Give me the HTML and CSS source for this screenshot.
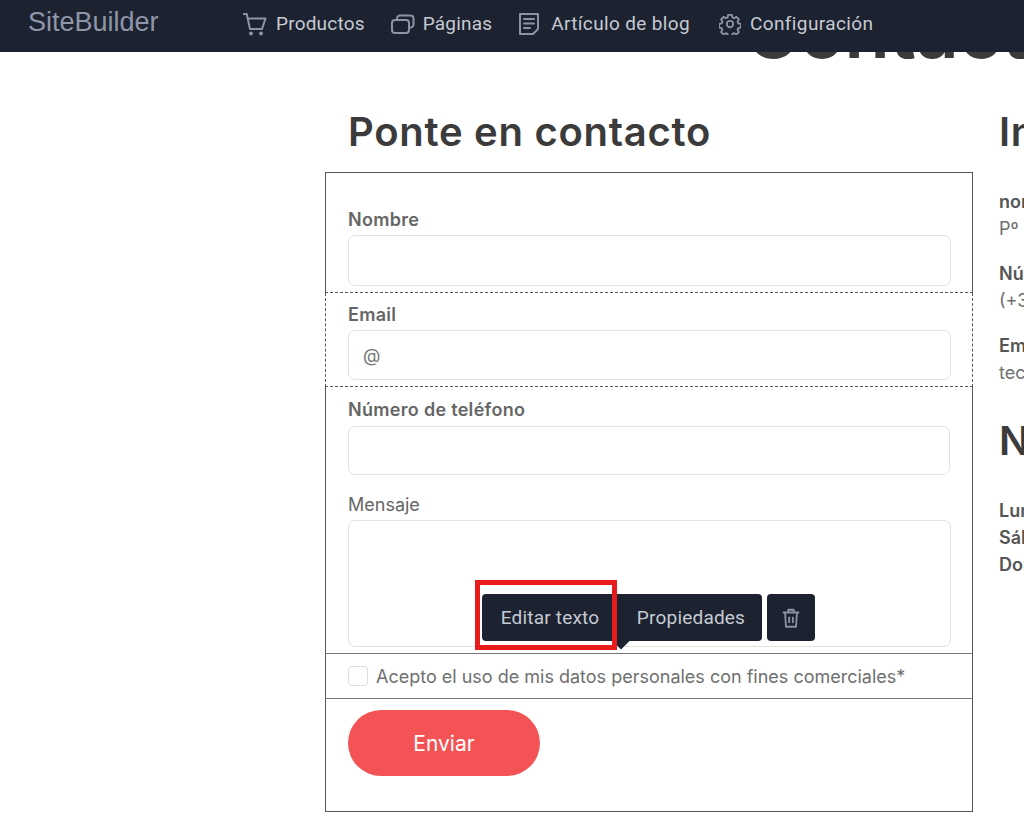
FILE: index.html
```html
<!DOCTYPE html>
<html lang="es">
<head>
<meta charset="utf-8">
<title>SiteBuilder</title>
<link rel="stylesheet" href="styles.css">
</head>
<body>
<nav class="topbar">
  <a class="brand">SiteBuilder</a>
  <ul class="menu">
    <li class="menu-item"><svg class="menu-icon" viewBox="0 0 24 24"><path d="M0.500 2h3.200l3.300 15h12l3.500-10.500H5"/><circle cx="8" cy="21.500" r="1" class="dot"/><circle cx="18" cy="21.500" r="1" class="dot"/></svg>Productos</li>
    <li class="menu-item"><svg class="menu-icon" viewBox="0 0 24 24"><rect x="1" y="8" width="17" height="13" rx="3"/><path d="M6 8V6.500A3 3 0 0 1 9 3.500h10.500a3 3 0 0 1 3 3v6a3 3 0 0 1-3 3H18"/></svg>Páginas</li>
    <li class="menu-item menu-item-blog"><svg class="menu-icon menu-icon-doc" viewBox="0 0 22 24"><path d="M2 2h18v15l-5 5H2z"/><path d="M6 7h10M6 11.500h10M6 16h6"/></svg>Artículo de blog</li>
    <li class="menu-item menu-item-config"><svg class="menu-icon menu-icon-gear" viewBox="0 0 24 24"><circle cx="12" cy="12" r="3.500"/><path d="M10 2h4l.7 2.900 1.800.8 2.500-1.500 2.700 2.800-1.500 2.400.8 1.800 3 .800v3.800l-3 .7-.8 1.800 1.500 2.500-2.700 2.700-2.500-1.500-1.800.8-.7 2.900h-4l-.7-2.900-1.800-.8-2.500 1.500-2.700-2.700 1.500-2.500-.8-1.800-3-.7v-3.800l3-.8.8-1.800-1.500-2.400 2.700-2.800 2.500 1.500 1.800-.8z"/></svg>Configuración</li>
  </ul>
</nav>
<main class="page">
  <h1 class="page-title">Contacto</h1>
  <div class="columns">
    <section class="form-col">
      <h2 class="section-title">Ponte en contacto</h2>
      <form class="form-box">
        <div class="row row-name">
          <label class="label">Nombre</label>
          <div class="input input-name"></div>
        </div>
        <div class="row row-email">
          <label class="label">Email</label>
          <div class="input input-email">@</div>
        </div>
        <div class="row row-phone">
          <label class="label label-phone">Número de teléfono</label>
          <div class="input input-phone"></div>
        </div>
        <div class="row row-message">
          <label class="label label-plain">Mensaje</label>
          <div class="textarea"></div>
        </div>
        <div class="row row-check">
          <span class="checkbox"></span>
          <span class="check-text">Acepto el uso de mis datos personales con fines comerciales*</span>
        </div>
        <div class="row row-submit">
          <button class="submit" type="button">Enviar</button>
        </div>
      </form>
      <div class="toolbar">
        <span class="tool tool-edit">Editar texto</span>
        <span class="tool tool-props">Propiedades</span>
        <span class="tool tool-trash"><svg class="trash-icon" viewBox="0 0 24 24"><path d="M3 6h18M9 6V3h6v3M5.500 6l1 15.500h11l1-15.500M10 10.500v7M14 10.500v7"/></svg></span>
        <span class="tool-arrow"></span>
      </div>
      <div class="highlight"></div>
    </section>
    <aside class="info-col">
      <h2 class="section-title">Información</h2>
      <div class="info-block"><strong>nombre</strong><br>Pº de la Castellana</div>
      <div class="info-block"><strong>Número de teléfono</strong><br>(+34) 912 345 678</div>
      <div class="info-block"><strong>Email</strong><br>tecnologia@ejemplo.com</div>
      <h2 class="section-title hours-title">Nuestro horario</h2>
      <div class="hours"><strong>Lunes a viernes</strong><br><strong>Sábado</strong><br><strong>Domingo</strong></div>
    </aside>
  </div>
</main>
</body>
</html>
```

FILE: styles.css
```css
* { box-sizing: border-box; }
html, body { margin: 0; height: 818px; overflow: hidden; background: #fff; }
body { font-family: Inter, "Noto Sans", sans-serif; color: #666; position: relative; }

.topbar {
  position: absolute; top: 0; left: 0; right: 0; z-index: 5;
  height: 52px; background: #1c2230;
  display: flex; align-items: flex-start;
  padding-left: 28px;
}
.brand {
  font-family: "Liberation Sans", sans-serif; font-size: 27px; line-height: 44px;
  color: #8f96a8; width: 215px; flex: none;
}
.menu { display: flex; list-style: none; margin: 0; padding: 0; gap: 26px; }
.menu-item {
  display: flex; align-items: center; height: 47px; gap: 8px;
  font-family: Roboto, sans-serif; font-size: 19px; color: #c6cad3;
  letter-spacing: .2px; white-space: nowrap;
}
.menu-item:first-child { gap: 9px; }
.menu-item-blog { gap: 11px; letter-spacing: .35px; }
.menu-item-config { gap: 9px; letter-spacing: .4px; margin-left: 3px; }
.menu-icon { width: 24px; height: 24px; fill: none; stroke: #8c93a3; stroke-width: 2; stroke-linejoin: round; stroke-linecap: round; flex: none; }
.menu-icon-doc { width: 22px; }
.menu-icon-gear { width: 22px; height: 22px; }
.dot { fill: #8c93a3; }

.page { height: 818px; }
.page-title {
  margin: 0 0 0 745px; height: 61px; font-size: 74px; line-height: 63px; font-weight: 600; color: #3b3b3b; white-space: nowrap;
}
.columns { display: flex; padding-left: 325px; }
.form-col { width: 648px; position: relative; flex: none; }
.info-col { margin-left: 26px; flex: none; width: 400px; }
.section-title {
  margin: 47px 0 0; padding-left: 23px; font-size: 40px; line-height: 47px; font-weight: 600; letter-spacing: .72px; color: #3b3b3b; height: 47px; white-space: nowrap;
}
.form-col .section-title { margin-bottom: 17px; }
.info-col .section-title { padding-left: 0; margin-bottom: 33px; }
.form-box { border: 1px solid #555; height: 640px; display: flex; flex-direction: column; }
.row { padding: 0 22px; flex: none; }
.row-name, .row-email, .row-message, .row-check { margin: 0 -1px; padding-left: 23px; padding-right: 22px; }
.row-name { height: 120px; padding-top: 35px; border-bottom: 1px dashed #555; }
.row-email { height: 94px; padding-top: 10px; border: 1px dashed #555; border-top: 0; background: #fff; padding-left: 22px; padding-right: 21px; }
.row-phone { height: 95px; padding-top: 11px; }
.row-message { height: 172px; padding-top: 11px; border-bottom: 1px solid #777; }
.row-check { height: 45px; display: flex; align-items: center; gap: 8px; border-bottom: 1px solid #777; }
.row-submit { padding-top: 11px; }
.label { display: block; font-size: 18px; line-height: 24px; font-weight: 600; letter-spacing: .3px; color: #666; margin-bottom: 3px; height: 24px; }
.label-phone { margin-bottom: 4px; }
.label-plain { font-weight: 400; letter-spacing: 0; }
.input { height: 50px; border: 1px solid #e2e2e2; border-radius: 7px; }
.input-name { height: 51px; }
.input-phone { height: 49px; }
.input-email { font-size: 18px; line-height: 50px; padding-left: 14px; color: #777; }
.textarea { height: 127px; border: 1px solid #e2e2e2; border-radius: 7px; }
.checkbox { width: 20px; height: 20px; border: 1px solid #ddd; border-radius: 4px; flex: none; }
.check-text { font-size: 18px; color: #6f6f6f; white-space: nowrap; }
.submit { width: 192px; height: 66px; border: 0; border-radius: 33px; background: #f45356; color: #fff; font: 400 21px Inter, sans-serif; }

.toolbar { position: absolute; left: 157px; top: 533px; display: flex; }
.tool {
  background: #1c2230; color: #c6cad3; height: 47px; display: flex; align-items: center; justify-content: center;
  font-family: Roboto, sans-serif; font-size: 19px; letter-spacing: .2px; white-space: nowrap;
}
.tool-edit { width: 136px; border-radius: 4px 0 0 4px; }
.tool-props { width: 144px; border-radius: 0 4px 4px 0; padding-left: 2px; }
.tool-trash { width: 48px; border-radius: 4px; margin-left: 5px; }
.trash-icon { width: 22px; height: 22px; fill: none; stroke: #8c93a3; stroke-width: 2; stroke-linejoin: round; }
.tool-arrow { position: absolute; left: 133px; top: 41px; width: 12px; height: 12px; background: #1c2230; transform: rotate(45deg); }
.highlight { position: absolute; left: 150px; top: 519px; width: 142px; height: 70px; border: 5px solid #e81c1c; }

.info-block { font-size: 18px; line-height: 27px; margin-bottom: 18px; color: #6f6f6f; white-space: nowrap; }
.info-block strong, .hours strong { color: #555; font-weight: 600; }
.info-col .hours-title { margin-top: 31px; margin-bottom: 33px; }
.hours { font-size: 18px; line-height: 27px; white-space: nowrap; }
```
